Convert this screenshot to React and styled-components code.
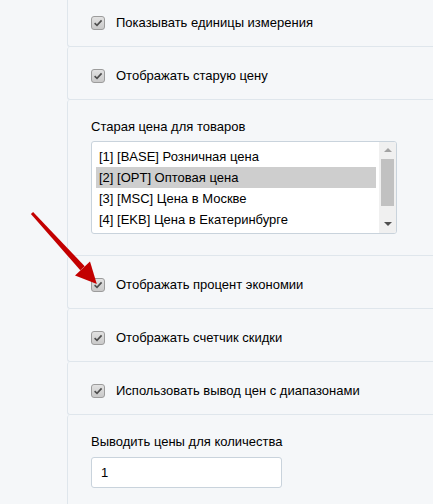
import React from 'react';
import styled, { createGlobalStyle } from 'styled-components';

const GlobalStyle = createGlobalStyle`
    html, body {
        margin: 0;
        padding: 0;
        background: #f5f7f9;
        font-family: "Liberation Sans", Arial, sans-serif;
        font-size: 13px;
        color: #000;
        overflow: hidden;
    }
`;

const priceTypes = [
    '[1] [BASE] Розничная цена',
    '[2] [OPT] Оптовая цена',
    '[3] [MSC] Цена в Москве',
    '[4] [EKB] Цена в Екатеринбурге',
];

function CheckBox() {
    return (
        <Box>
            <svg width="10" height="10" viewBox="0 0 10 10">
                <path d="M1.6 5.2 L4 7.4 L8.6 2.4" fill="none" stroke="#4d4d4d" strokeWidth="1.6" />
            </svg>
        </Box>
    );
}

function CheckRow({ label }) {
    return (
        <Row>
            <CheckLabel>
                <CheckBox />
                <span>{label}</span>
            </CheckLabel>
        </Row>
    );
}

function PriceList({ items, selected }) {
    return (
        <ListBox>
            <Options>
                {items.map((item, i) => (
                    <Option key={item} $active={i === selected}>{item}</Option>
                ))}
            </Options>
            <ScrollBar>
                <ArrowUp />
                <Thumb />
                <ArrowDown />
            </ScrollBar>
        </ListBox>
    );
}

function App() {
    return (
        <Page>
            <GlobalStyle />
            <Panel>
                <CheckRow label="Показывать единицы измерения" />
                <CheckRow label="Отображать старую цену" />
                <FieldRow $top={19} $gap={6} $bottom={21}>
                    <FieldLabel>Старая цена для товаров</FieldLabel>
                    <PriceList items={priceTypes} selected={1} />
                </FieldRow>
                <CheckRow label="Отображать процент экономии" />
                <CheckRow label="Отображать счетчик скидки" />
                <CheckRow label="Использовать вывод цен с диапазонами" />
                <FieldRow $top={19} $gap={7} $bottom={40}>
                    <FieldLabel>Выводить цены для количества</FieldLabel>
                    <TextInput defaultValue="1" />
                </FieldRow>
            </Panel>
            <Pointer width="433" height="504" viewBox="0 0 433 504">
                <polygon points="30.9,214 33.1,212 84.7,266.3 80.3,270.3" fill="#c30000" />
                <polygon points="75,275.4 90,261.4 96.8,284" fill="#c30000" />
            </Pointer>
        </Page>
    );
}

const Page = styled.div`
    position: relative;
    height: 504px;
    overflow: hidden;
`;

const Panel = styled.div`
    margin-top: -6px;
    padding-left: 67px;
    display: flex;
    flex-direction: column;
`;

const Row = styled.div`
    height: 52px;
    box-sizing: content-box;
    display: flex;
    align-items: flex-start;
    padding: 0 23px;
    border-left: 1px solid #dfe6ec;
    border-bottom: 1px solid #dfe6ec;
    border-radius: 3px 0 0 3px;
`;

const FieldRow = styled.div`
    display: flex;
    flex-direction: column;
    padding: ${p => p.$top}px 23px ${p => p.$bottom}px;
    border-left: 1px solid #dfe6ec;
    border-bottom: 1px solid #dfe6ec;
    border-radius: 3px 0 0 3px;

    & > :first-child {
        margin-bottom: ${p => p.$gap}px;
    }
`;

const CheckLabel = styled.label`
    margin-top: 21px;
    display: flex;
    align-items: center;
    gap: 11px;
    line-height: 16px;
`;

const Box = styled.span`
    width: 14px;
    height: 14px;
    box-sizing: border-box;
    border: 1px solid #9c9c9c;
    border-radius: 3px;
    background: linear-gradient(#e2e2e2, #c9c9c9);
    display: flex;
    align-items: center;
    justify-content: center;
`;

const FieldLabel = styled.div`
    line-height: 16px;
`;

const ListBox = styled.div`
    width: 306px;
    height: 93px;
    box-sizing: border-box;
    border: 1px solid #c9d3dc;
    border-radius: 3px;
    background: #fff;
    display: flex;
    overflow: hidden;
`;

const Options = styled.div`
    flex: 1;
    padding: 4px 3px 0 4px;
`;

const Option = styled.div`
    height: 21px;
    line-height: 21px;
    padding-left: 3px;
    white-space: nowrap;
    background: ${p => (p.$active ? '#cecece' : 'transparent')};
`;

const ScrollBar = styled.div`
    width: 17px;
    background: #f0f0f0;
    display: flex;
    flex-direction: column;
    align-items: center;
`;

const ArrowUp = styled.span`
    margin-top: 6px;
    width: 0;
    height: 0;
    border-left: 4px solid transparent;
    border-right: 4px solid transparent;
    border-bottom: 4px solid #a3a3a3;
`;

const Thumb = styled.span`
    margin-top: 7px;
    width: 13px;
    height: 47px;
    background: #c1c1c1;
`;

const ArrowDown = styled.span`
    margin-top: auto;
    margin-bottom: 7px;
    width: 0;
    height: 0;
    border-left: 4px solid transparent;
    border-right: 4px solid transparent;
    border-top: 4px solid #505050;
`;

const TextInput = styled.input`
    width: 191px;
    height: 31px;
    box-sizing: border-box;
    border: 1px solid #c9d3dc;
    border-radius: 3px;
    padding: 0 9px;
    font: inherit;
    color: #000;
    background: #fff;
    outline: none;
`;

const Pointer = styled.svg`
    position: absolute;
    left: 0;
    top: 0;
    pointer-events: none;
`;

export default App
